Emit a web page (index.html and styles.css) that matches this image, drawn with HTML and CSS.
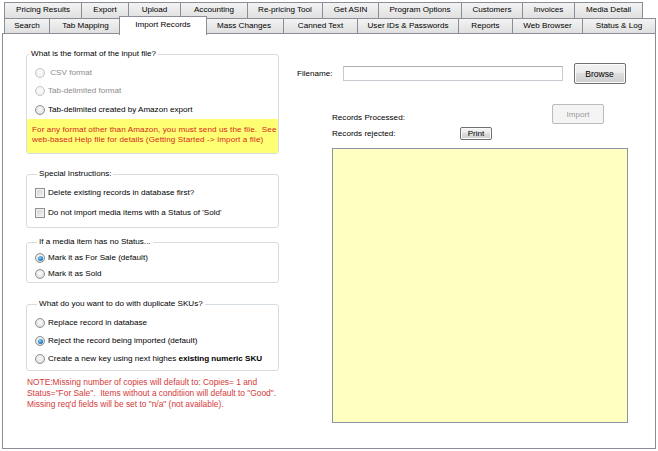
FILE: index.html
```html
<!DOCTYPE html>
<html>
<head>
<meta charset="utf-8">
<link rel="stylesheet" href="styles.css">
</head>
<body>
<div class="window">
  <div class="tabs">
    <div class="tabrow row1">
      <div class="tab t78">Pricing Results</div>
      <div class="tab t48">Export</div>
      <div class="tab t53">Upload</div>
      <div class="tab t68">Accounting</div>
      <div class="tab t76">Re-pricing Tool</div>
      <div class="tab t57">Get ASIN</div>
      <div class="tab t84">Program Options</div>
      <div class="tab t62">Customers</div>
      <div class="tab t53">Invoices</div>
      <div class="tab t69">Media Detail</div>
    </div>
    <div class="tabrow row2">
      <div class="tab t46">Search</div>
      <div class="tab t73">Tab Mapping</div>
      <div class="tab selected">Import Records</div>
      <div class="tab t80">Mass Changes</div>
      <div class="tab t75">Canned Text</div>
      <div class="tab t102">User IDs &amp; Passwords</div>
      <div class="tab t55">Reports</div>
      <div class="tab t71">Web Browser</div>
      <div class="tab t74">Status &amp; Log</div>
    </div>
  </div>
  <div class="panel">
    <div class="leftcol">
      <fieldset class="group g1">
        <legend>What is the format of the input file?</legend>
        <div class="opts">
          <label class="opt disabled"><span class="radio"></span><span class="txt">&nbsp;CSV format</span></label>
          <label class="opt disabled"><span class="radio"></span><span class="txt">Tab-delimited format</span></label>
          <label class="opt"><span class="radio"></span><span class="txt">Tab-delimited created by Amazon export</span></label>
        </div>
        <div class="notice">For any format other than Amazon, you must send us the file.&nbsp; See web-based Help file for details (Getting Started -&gt; Import a file)</div>
      </fieldset>

      <fieldset class="group g2">
        <legend>Special Instructions:</legend>
        <label class="opt"><span class="check"></span><span class="txt">Delete existing records in database first?</span></label>
        <label class="opt"><span class="check"></span><span class="txt">Do not import media items with a Status of 'Sold'</span></label>
      </fieldset>

      <fieldset class="group g3">
        <legend>If a media item has no Status...</legend>
        <label class="opt"><span class="radio on"></span><span class="txt">Mark it as For Sale (default)</span></label>
        <label class="opt"><span class="radio"></span><span class="txt">Mark it as Sold</span></label>
      </fieldset>

      <fieldset class="group g4">
        <legend>What do you want to do with duplicate SKUs?</legend>
        <label class="opt"><span class="radio"></span><span class="txt">Replace record in database</span></label>
        <label class="opt"><span class="radio on"></span><span class="txt">Reject the record being imported (default)</span></label>
        <label class="opt"><span class="radio"></span><span class="txt">Create a new key using next highes <b>existing numeric SKU</b></span></label>
      </fieldset>

      <p class="note">NOTE:Missing number of copies will default to: Copies= 1 and<br>Status="For Sale".&nbsp; Items without a conditiion will default to "Good".<br>Missing req'd fields will be set to "n/a" (not available).</p>
    </div>

    <div class="rightcol">
      <div class="filerow">
        <span class="lbl">Filename:</span>
        <div class="input"></div>
        <button class="btn browse">Browse</button>
      </div>
      <div class="records">
        <div class="rowa">
          <span class="lbl">Records Processed:</span>
          <button class="btn import" disabled>Import</button>
        </div>
        <div class="rowb">
          <span class="lbl rej">Records rejected:</span>
          <button class="btn print">Print</button>
        </div>
        <div class="results"></div>
      </div>
    </div>
  </div>
</div>
</body>
</html>
```

FILE: styles.css
```css
* { box-sizing: border-box; }
html, body { margin: 0; padding: 0; background: #ffffff; }
body {
  font-family: "Liberation Sans", Arial, sans-serif;
  font-size: 8.1px;
  color: #000;
  width: 658px;
  height: 451px;
  overflow: hidden;
}
.window { padding-left: 2px; }

/* ---- tabs ---- */
.tabs { height: 34px; padding-left: 2px; padding-top: 2px; }
.tabrow { display: flex; }
.row2 { margin-top: -1px; }
.tab {
  height: 17px;
  margin-left: -1px;
  border: 1px solid #8a8e97;
  background: linear-gradient(#f3f3f3, #e0e0e0);
  display: flex;
  align-items: center;
  justify-content: center;
  white-space: nowrap;
  line-height: 10px;
  padding-bottom: 1px;
}
.tabrow .tab:first-child { margin-left: 0; }
.row2 .tab { height: 16px; }
.row2 .tab.selected {
  position: relative;
  z-index: 2;
  width: 88px;
  height: 19px;
  margin-top: -2px;
  margin-left: -3px;
  margin-right: -2px;
  background: #fff;
  border-bottom: none;
  padding-bottom: 3px;
}
.t46 { width: 46px; } .t48 { width: 48px; } .t53 { width: 53px; }
.t55 { width: 55px; } .t57 { width: 57px; } .t62 { width: 62px; }
.t68 { width: 68px; } .t69 { width: 69px; } .t71 { width: 71px; }
.t73 { width: 73px; } .t74 { width: 74px; } .t75 { width: 75px; }
.t76 { width: 76px; } .t78 { width: 78px; } .t80 { width: 80px; }
.t84 { width: 84px; } .t102 { width: 102px; }

/* ---- panel ---- */
.panel {
  margin-top: -1px;
  width: 654px;
  height: 416px;
  border: 1px solid #8a8e97;
  background: #fff;
  display: flex;
}
.leftcol { width: 276px; padding-left: 23px; padding-top: 15px; }
.rightcol { padding-left: 18px; padding-top: 29px; }

/* ---- group boxes ---- */
.group {
  margin: 0;
  padding: 0 0 0 8px;
  width: 253px;
  border: 1px solid #d5dde3;
  border-radius: 3px;
  min-width: 0;
}
.group legend {
  padding: 0 2px;
  margin-left: 2px;
  line-height: 10px;
  color: #000;
}
.g1 { padding: 5px 0 0 0; }
.g1 .opts { padding-left: 8px; }
.g1 .opt { height: 18px; }
.g1 .opt:last-child { height: 19px; }
.notice {
  background: #ffff73;
  color: #d41f1f;
  margin: 0;
  padding: 6px 0 0 5px;
  line-height: 10px;
  height: 34px;
  letter-spacing: 0.1px;
}
.g2 { margin-top: 15px; padding-top: 4px; padding-bottom: 4px; }
.g2 .opt { height: 20px; }
.g3 { margin-top: 9px; padding-top: 3px; }
.g3 .opt { height: 16px; }
.g4 { margin-top: 16px; padding-top: 5px; padding-bottom: 2px; }
.g4 .opt { height: 18px; }

.opt { display: flex; align-items: center; white-space: nowrap; line-height: 10px; }
.opt .txt { margin-left: 3px; }
.opt.disabled .txt { color: #8c8c8c; }
.opt b { font-weight: bold; }

.radio {
  flex: none;
  width: 10px; height: 10px;
  border-radius: 50%;
  border: 1px solid #8a8f94;
  background: radial-gradient(circle at 50% 40%, #fbfbfb 0%, #e6e6e6 60%, #d2d2d2 100%);
  display: flex; align-items: center; justify-content: center;
}
.disabled .radio {
  border-color: #c4c7c9;
  background: radial-gradient(circle at 50% 40%, #fdfdfd 0%, #f0f0f0 70%, #e4e4e4 100%);
}
.radio.on::after {
  content: "";
  width: 5px; height: 5px;
  border-radius: 50%;
  background: radial-gradient(circle at 40% 35%, #8fd3f8 0%, #2a82c8 55%, #0c4f96 100%);
}
.check {
  flex: none;
  width: 10px; height: 10px;
  border: 1px solid #8e9194;
  background: linear-gradient(135deg, #d0d0d0, #f6f6f6);
  box-shadow: inset 0 0 0 1px #f2f2f2;
}

.note {
  margin: 6px 0 0 0;
  padding-left: 1px;
  font-size: 8.4px;
  color: #d33a3a;
  line-height: 11px;
  white-space: nowrap;
}

/* ---- right column ---- */
.filerow { display: flex; align-items: center; height: 21px; }
.lbl { white-space: nowrap; line-height: 10px; }
.input {
  margin-left: 10px;
  width: 220px;
  height: 15px;
  border: 1px solid #c7cbd1;
  border-top-color: #abadb3;
  background: #fff;
}
.btn {
  font-family: inherit;
  font-size: 8.1px;
  color: #000;
  padding: 0;
  border: 1px solid #707070;
  border-radius: 2px;
  background: linear-gradient(#f2f2f2 0%, #ebebeb 50%, #dddddd 50%, #cfcfcf 100%);
  box-shadow: inset 0 0 0 1px #fbfbfb;
}
.browse { margin-left: 11px; width: 52px; height: 21px; font-size: 8.6px; }
.records { padding-left: 35px; padding-top: 20px; width: 330px; }
.rowa { display: flex; height: 20px; width: 295px; }
.rowa .lbl { align-self: flex-end; padding-bottom: 1px; }
.import {
  margin-left: auto;
  margin-right: 23px;
  width: 52px;
  height: 20px;
  border-color: #b8bcc0;
  background: #f4f4f4;
  color: #9a9a9a;
  box-shadow: none;
}
.rowb { display: flex; align-items: center; margin-top: 3px; height: 13px; }
.rej { width: 128px; }
.print { width: 32px; height: 13px; border-radius: 2px; }
.results {
  margin-top: 8px;
  width: 296px;
  height: 275px;
  background: #ffffc2;
  border: 1px solid #8c95a4;
}
```
